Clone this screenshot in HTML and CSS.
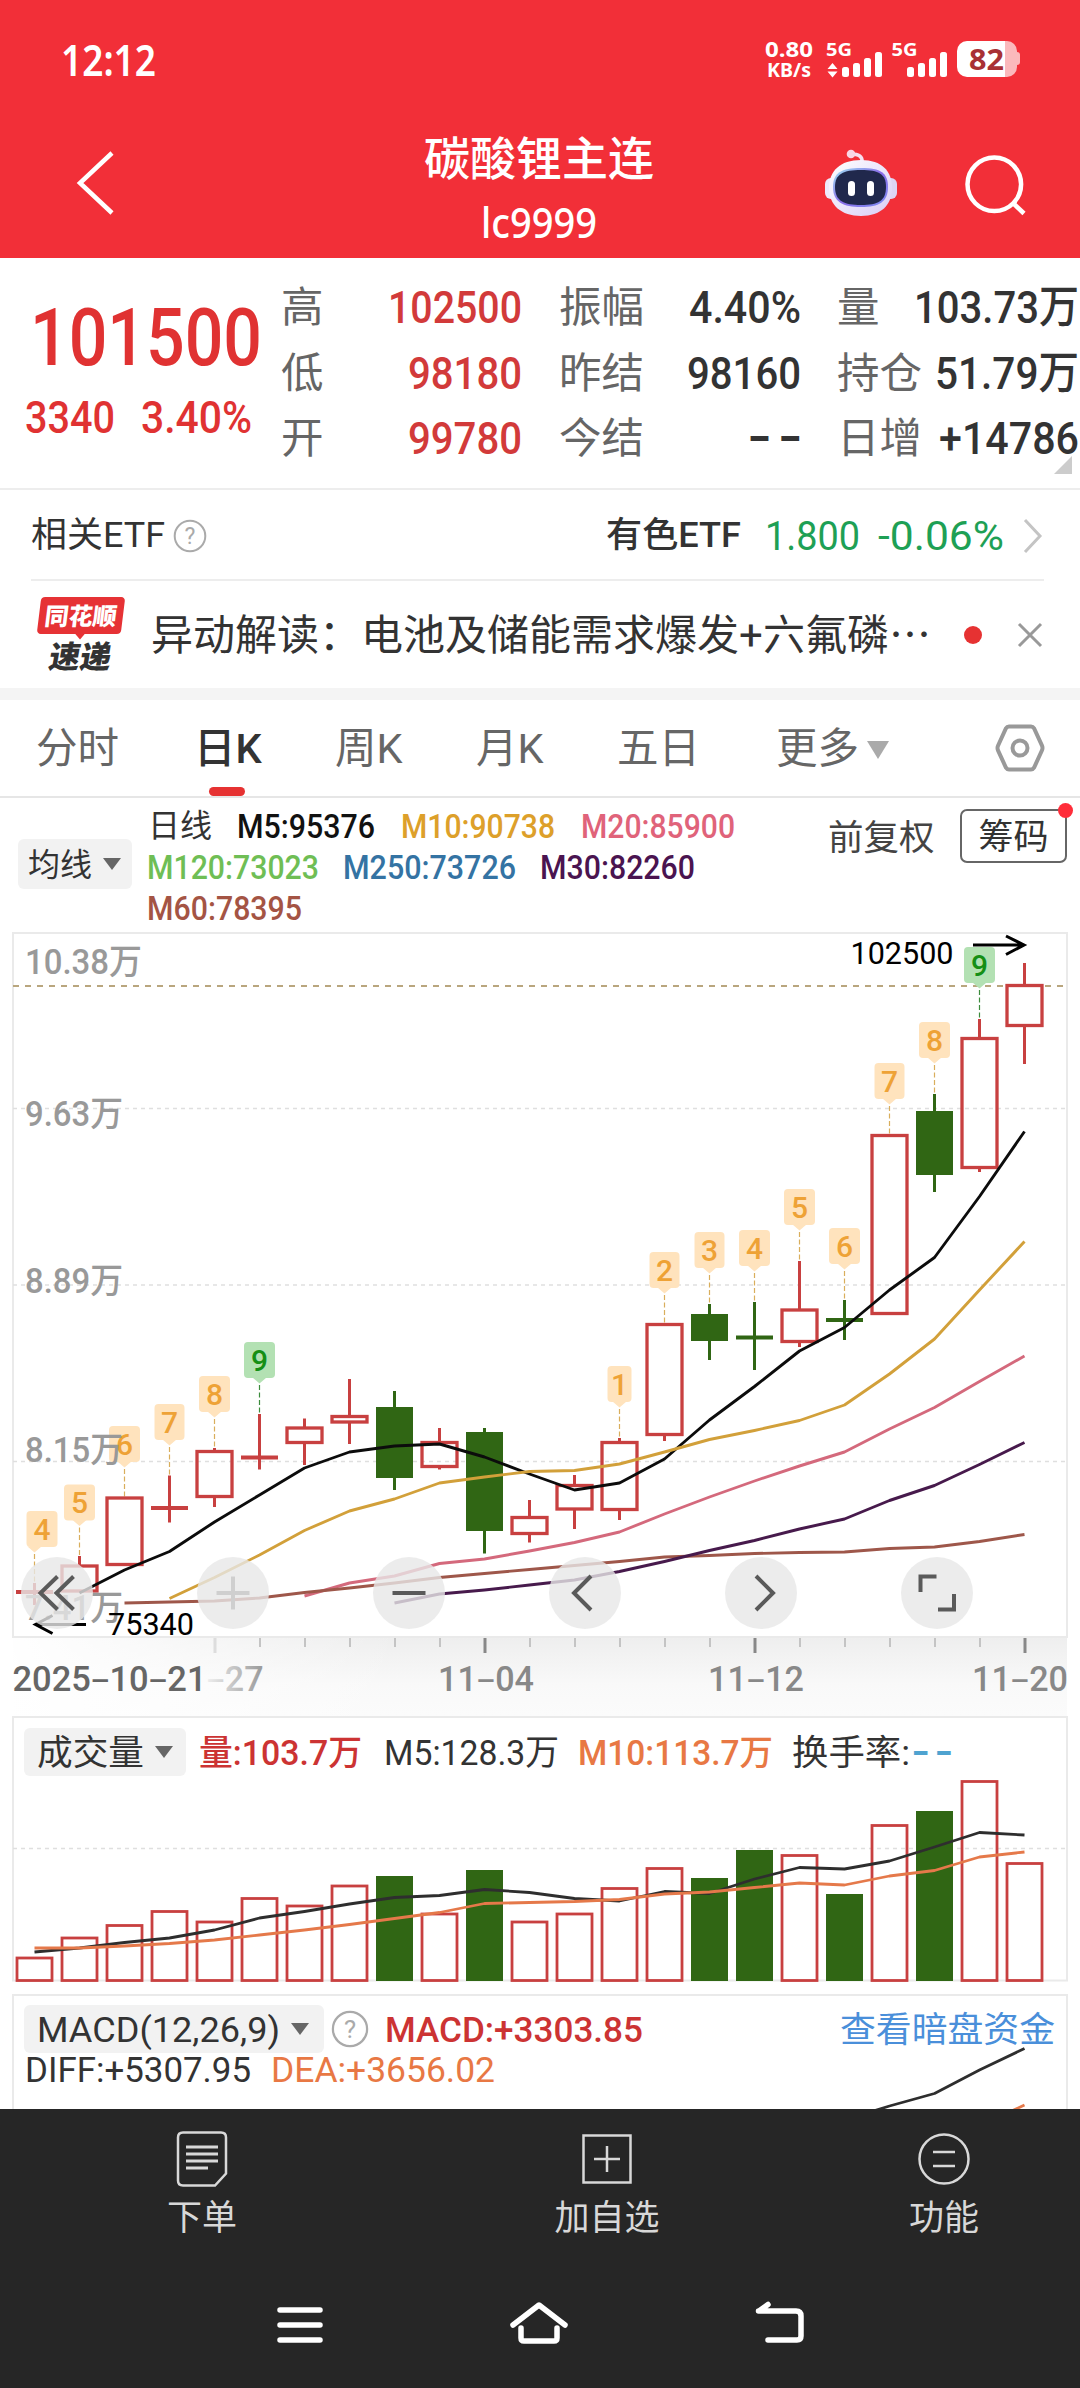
FILE: index.html
```html
<!DOCTYPE html>
<html lang="zh-CN">
	<head>
		<meta charset="utf-8">
		<meta name="viewport" content="width=device-width">
		<title>碳酸锂主连 lc9999</title>
		<link rel="stylesheet" href="styles.css">
	</head>
	<body>
		<header>
			<div class="status">
				<span class="clock fit" data-w="95">12:12</span>
				<div class="speed"><span class="fit" data-w="48">0.80</span><small class="fit" data-w="44">KB/s</small></div>
				<svg class="signal" width="131" height="38" viewBox="826 40 131 38">
					<g fill="#fff">
						<text x="826" y="55.500" textLength="26" lengthAdjust="spacingAndGlyphs">5G</text>
						<path d="M827.500 69l5-6 5 6zM827.500 71.500l5 6 5-6z"/>
						<rect x="842" y="67" width="7" height="10" rx="2.500"/><rect x="853" y="63" width="7" height="14" rx="2.500"/><rect x="864" y="58" width="7" height="19" rx="2.500"/><rect x="875" y="52" width="7" height="25" rx="2.500"/>
						<text x="891.500" y="55.500" textLength="26" lengthAdjust="spacingAndGlyphs">5G</text>
						<rect x="907" y="67" width="7" height="10" rx="2.500"/><rect x="918" y="63" width="7" height="14" rx="2.500"/><rect x="929" y="58" width="7" height="19" rx="2.500"/><rect x="940" y="52" width="7" height="25" rx="2.500"/>
					</g>
				</svg>
				<div class="battery"><span class="fit" data-w="35">82</span></div>
			</div>
			<div class="titlebar">
				<svg class="back" width="40" height="68" viewBox="0 0 40 68"><path d="M36 4L4 34l32 30"/></svg>
				<div class="title"><h1>碳酸锂主连</h1><span class="fit" data-w="116">lc9999</span></div>
				<svg class="robot" width="76" height="70" viewBox="823 148 76 70">
					<defs>
						<linearGradient id="shell" x1="0" y1="0" x2="1" y2="1"><stop offset="0" stop-color="#fff"/><stop offset=".5" stop-color="#ece6fb"/><stop offset="1" stop-color="#d9cdf5"/></linearGradient>
						<linearGradient id="rim" x1="0" y1="0" x2="1" y2="1"><stop offset="0" stop-color="#9fe4f2"/><stop offset=".5" stop-color="#8a6ce8"/><stop offset="1" stop-color="#7b8df0"/></linearGradient>
					</defs>
					<path d="M862 162q1-8-11-8" fill="none" stroke="#f7dff0" stroke-width="3.500"/>
					<circle cx="851" cy="154" r="4.300" fill="#f9d6e6"/>
					<rect x="825" y="178" width="14" height="21" rx="6" fill="#eee9fb"/><rect x="883" y="178" width="14" height="21" rx="6" fill="#ddd5f5"/>
					<path d="M861 160c21 0 31 11 31 28s-11 28-31 28-32-11-32-28 11-28 32-28z" fill="url(#shell)"/>
					<path d="M861 168c20 0 27 5 27 19 0 15-9 20-27 20s-28-5-28-20c0-14 8-19 28-19z" fill="url(#rim)"/>
					<path d="M861 170c18 0 25 4 25 17 0 14-8 18-25 18s-26-4-26-18c0-13 8-17 26-17z" fill="#20284c"/>
					<rect x="848" y="181" width="7" height="15" rx="3.500" fill="#fff"/><rect x="867" y="181" width="7" height="15" rx="3.500" fill="#fff"/>
				</svg>
				<svg class="search" width="64" height="64" viewBox="964 154 64 64"><circle cx="994.300" cy="184.300" r="26.800"/><path d="M1013 203l11 10.500"/></svg>
			</div>
		</header>

		<section class="quote">
			<div class="price">
				<b class="fit" data-w="232">101500</b>
				<div><span class="fit" data-w="90">3340</span><span class="fit" data-w="111">3.40%</span></div>
			</div>
			<dl class="col1">
				<dt>高</dt><dd><span class="fit" data-w="134">102500</span></dd>
				<dt>低</dt><dd><span class="fit" data-w="114">98180</span></dd>
				<dt>开</dt><dd><span class="fit" data-w="114">99780</span></dd>
			</dl>
			<dl class="col2">
				<dt>振幅</dt><dd><span class="fit" data-w="112">4.40%</span></dd>
				<dt>昨结</dt><dd><span class="fit" data-w="114">98160</span></dd>
				<dt>今结</dt><dd><span class="fit nil" data-w="53">– –</span></dd>
			</dl>
			<dl class="col3">
				<dt>量</dt><dd><span class="fit" data-w="165">103.73万</span></dd>
				<dt>持仓</dt><dd><span class="fit" data-w="144">51.79万</span></dd>
				<dt>日增</dt><dd><span class="fit" data-w="140">+14786</span></dd>
			</dl>
			<i class="corner"></i>
		</section>

		<section class="etf">
			<span class="fit" data-w="134">相关ETF</span>
			<svg class="help" width="34" height="34" viewBox="0 0 34 34"><circle cx="17" cy="17" r="15.300"/><text x="17" y="25">?</text></svg>
			<b class="fit" data-w="135">有色ETF</b>
			<span class="fit down" data-w="95">1.800</span>
			<span class="fit down" data-w="126">-0.06%</span>
			<svg class="more" width="20" height="36" viewBox="0 0 20 36"><path d="M2 2l15 16L2 34"/></svg>
		</section>

		<section class="news">
			<div class="logo"><em>同花顺</em><strong>速递</strong></div>
			<span class="fit headline" data-w="780">异动解读：电池及储能需求爆发+六氟磷⋯</span>
			<i class="dot"></i>
			<svg width="26" height="26" viewBox="0 0 26 26"><path d="M2 2l22 22M24 2L2 24"/></svg>
		</section>

		<nav class="tabs">
			<span>分时</span><span class="on">日K</span><span>周K</span><span>月K</span><span>五日</span><span>更多<i class="tri"></i></span>
			<svg width="50" height="50" viewBox="0 0 50 50"><path d="M14 3.500h22q2 0 3 1.700l8 17.500q1 2.300 0 4.600l-8 17.500q-1 1.700-3 1.700H14q-2 0-3-1.700L3 27.300q-1-2.300 0-4.600l8-17.500q1-1.700 3-1.700z"/><circle cx="25" cy="25" r="7.500"/></svg>
		</nav>

		<section class="legend">
			<div class="pick"><span class="fit" data-w="64">均线</span><i class="tri"></i></div>
			<div class="mas">
				<div><span class="fit ma" data-w="64">日线</span><span class="fit m5" data-w="138">M5:95376</span><span class="fit m10" data-w="154">M10:90738</span><span class="fit m20" data-w="154">M20:85900</span></div>
				<div><span class="fit m120" data-w="172">M120:73023</span><span class="fit m250" data-w="173">M250:73726</span><span class="fit m30" data-w="155">M30:82260</span></div>
				<div><span class="fit m60" data-w="155">M60:78395</span></div>
			</div>
			<span class="adjust">前复权</span>
			<span class="chips">筹码<i></i></span>
		</section>

		<section class="kline">
			<svg id="kline" width="1080" height="784" viewBox="0 932 1080 784"></svg>
			<div class="tools">
				<span><svg viewBox="0 0 72 72"><path d="M36.500 19.500L19.500 36l17 16.500M52.500 19.500L35.500 36l17 16.500"/></svg></span>
				<span><svg class="off" viewBox="0 0 72 72"><path d="M19.500 36h33M36 19.500v33"/></svg></span>
				<span><svg viewBox="0 0 72 72"><path d="M19.500 36h33"/></svg></span>
				<span><svg viewBox="0 0 72 72"><path d="M42 19L25 36l17 17"/></svg></span>
				<span><svg viewBox="0 0 72 72"><path d="M31 19l17 17-17 17"/></svg></span>
				<span><svg viewBox="0 0 72 72"><path d="M19.500 35V19.500h16M37 52.500h16V37"/></svg></span>
			</div>
		</section>

		<section class="volume">
			<div class="head">
				<div class="pick"><span class="fit" data-w="107">成交量</span><i class="tri"></i></div>
				<span class="fit up" data-w="163">量:103.7万</span>
				<span class="fit" data-w="175">M5:128.3万</span>
				<span class="fit dea" data-w="195">M10:113.7万</span>
				<span class="fit" data-w="118">换手率:</span>
				<span class="fit none" data-w="40">– –</span>
			</div>
			<svg id="volume" width="1080" height="278" viewBox="0 1716 1080 278"></svg>
		</section>

		<section class="macd">
			<div class="head">
				<div class="pick"><span class="fit" data-w="243">MACD(12,26,9)</span><i class="tri"></i></div>
				<svg class="help" width="38" height="38" viewBox="0 0 34 34"><circle cx="17" cy="17" r="15.300"/><text x="17" y="25">?</text></svg>
				<span class="fit up" data-w="258">MACD:+3303.85</span>
				<a class="fit" data-w="215">查看暗盘资金</a>
			</div>
			<div class="head2"><span class="fit" data-w="226">DIFF:+5307.95</span><span class="fit dea" data-w="224">DEA:+3656.02</span></div>
			<svg id="macd" width="1080" height="115" viewBox="0 1994 1080 115"></svg>
		</section>

		<footer>
			<div class="actions">
				<div><svg width="56" height="58" viewBox="0 0 56 58"><path d="M9 2.500h38q5 0 5 5v36L41 55.500H9q-5 0-5-5v-43q0-5 5-5z"/><path d="M12 17h32M12 24h32M12 31h32M12 38h22" stroke-width="3"/></svg>下单</div>
				<div><svg width="56" height="58" viewBox="0 0 56 58"><path d="M4.500 5.500h47v47h-47zM28 16v26M15 29h26"/></svg>加自选</div>
				<div><svg width="56" height="58" viewBox="0 0 56 58"><circle cx="28" cy="29" r="24.500"/><path d="M17 22h22M17 36h22"/></svg>功能</div>
			</div>
			<div class="sysnav">
				<svg width="50" height="48" viewBox="0 0 50 48"><path d="M5 10h40M5 25h40M5 40h40"/></svg>
				<svg width="60" height="48" viewBox="0 0 60 48"><path d="M4 25L30 5l26 20M12 28v10q0 3 3 3h30q3 0 3-3V28"/></svg>
				<svg width="54" height="48" viewBox="0 0 54 48"><path d="M15 4.500L6 11q-1 0 0 0h37q5 0 5 5v20q0 4-4 4H15"/></svg>
			</div>
		</footer>
		<script src="chart.js"></script>
	</body>
</html>
```
FILE: styles.css
```css
*{
	box-sizing:border-box;
}

body{
	margin:0;
	width:1080px;
	height:2388px;
	overflow:hidden;
	display:flex;
	flex-direction:column;
	background:#FFF;
	color:#333;
	font-family:Roboto,"Noto Sans CJK SC",sans-serif;
	font-size:35px;
	line-height:1;
}

svg{
	display:block;
	flex:none;
}

i,em{
	font-style:normal;
}

section,nav,header,footer{
	flex:none;
}

.fit{
	display:inline-block;
	white-space:nowrap;
	transform-origin:0 50%;
	flex:none;
}

.tri{
	display:inline-block;
	width:18px;
	height:12px;
	background:#666;
	clip-path:polygon(0 0,100% 0,50% 100%);
}

/* header */
header{
	height:258px;
	background:#F22F38;
	color:#FFF;
}

.status{
	display:flex;
	height:118px;
	padding-left:61px;
	align-items:center;
}

.clock{
	font:600 43px/1 "Noto Sans",sans-serif;
}

.speed{
	display:flex;
	flex-direction:column;
	align-items:center;
	gap:1px;
	margin-left:609px;
	font:bold 21.5px/20px "Noto Sans",sans-serif;
}

.speed small{
	font-size:19px;
}

.signal{
	margin-left:13px;
	overflow:visible;
	font:bold 18px "Noto Sans",sans-serif;
}

.battery{
	position:relative;
	width:60px;
	height:36px;
	border-radius:10px;
	background:linear-gradient(90deg,#FFF 48px,#FBB9BC 48px);
	color:#A83034;
	font:bold 28px/36px "Noto Sans",sans-serif;
	padding-left:12px;
}

.battery::after{
	content:"";
	position:absolute;
	left:60px;
	top:11px;
	width:3px;
	height:13px;
	border-radius:0 3px 3px 0;
	background:#FBB9BC;
}

.titlebar{
	display:flex;
	height:140px;
	padding-left:76px;
	align-items:flex-start;
}

.titlebar svg{
	fill:none;
	stroke:#FFF;
	stroke-width:4.5;
}

.titlebar .robot{
	stroke:none;
	margin:30px 0 0 169px;
}

.titlebar .back{
	margin-top:31px;
}

.titlebar .search{
	margin:36px 0 0 65px;
}

.title{
	width:230px;
	margin:18px 0 0 308px;
	text-align:center;
	font:500 42px/46px "Noto Sans","Noto Sans CJK SC",sans-serif;
}

.title h1{
	margin:0 0 17px;
	font:500 46px/46px Roboto,"Noto Sans CJK SC",sans-serif;
	white-space:nowrap;
}

/* quote */
.quote{
	position:relative;
	display:flex;
	height:232px;
	border-bottom:2px solid #EDEDED;
	font-weight:500;
}

.price{
	width:281px;
	color:#E03232;
}

.price b{
	display:block;
	margin:40px 0 0 30px;
	font-size:80px;
	font-weight:500;
	line-height:80px;
}

.price div{
	display:flex;
	gap:26px;
	margin:16px 0 0 25px;
	font-size:45px;
	line-height:48px;
}

dl{
	display:grid;
	grid-template-columns:auto 1fr;
	grid-auto-rows:65.6px;
	align-items:center;
	margin:17px 0 0;
	height:197px;
	font-size:45px;
	line-height:65px;
}

dt{
	color:#666;
	font-size:42.5px;
	font-weight:400;
	white-space:nowrap;
}

dd{
	margin:0;
	text-align:right;
	height:65px;
}

.nil{
	font-weight:700;
}

.col1{
	width:241px;
	color:#D23A3A;
}

.col2{
	width:242px;
	margin-left:37px;
}

/* the long value of the first row runs close to its one-character label */
.col3{
	grid-template-columns:42px 1fr;
	width:242px;
	margin-left:36px;
}

.corner{
	position:absolute;
	right:8px;
	bottom:14px;
	width:18px;
	height:18px;
	background:#CCC;
	clip-path:polygon(100% 0,100% 100%,0 100%);
}

/* etf + news */
.etf{
	display:flex;
	align-items:center;
	height:91px;
	margin:0 36px 0 31px;
	padding-top:2px;
	border-bottom:2px solid #EDEDED;
	color:#333;
	font-size:35px;
	line-height:44px;
}

.etf b{
	margin-left:399px;
	font-weight:500;
}

.help{
	fill:none;
	stroke:#AAA;
	stroke-width:2;
}

.help text{
	fill:#AAA;
	stroke:none;
	font-size:23px;
	text-anchor:middle;
}

.etf .help{
	margin-left:8px;
}

.down{
	color:#1EA055;
	font-size:41px;
	margin-left:24px;
}

.down + .down{
	margin-left:18px;
}

.more{
	margin-left:19px;
	fill:none;
	stroke:#C4C4C4;
	stroke-width:3;
}

.news{
	display:flex;
	align-items:center;
	height:119px;
	padding:0 36px 0 37px;
	border-bottom:12px solid #F4F4F4;
}

.logo{
	position:relative;
	display:flex;
	flex-direction:column;
	align-items:center;
	width:88px;
	height:76px;
	font-family:"Noto Sans CJK SC",sans-serif;
	font-weight:900;
}

.logo em{
	width:84px;
	height:37px;
	border-radius:4px;
	background:#E63235;
	color:#FFF;
	font-size:24px;
	line-height:35px;
	text-align:center;
	transform:skewX(-7deg);
}

.logo::after{
	content:"";
	position:absolute;
	left:37px;
	top:36px;
	width:12px;
	height:7px;
	background:#E63235;
	clip-path:polygon(0 0,100% 0,50% 100%);
}

.logo strong{
	margin-top:5px;
	font-size:31px;
	font-weight:900;
	line-height:31px;
	transform:skewX(-10deg);
}

.headline{
	margin-left:26px;
	padding-top:2px;
	font-size:42px;
	line-height:50px;
}

.dot{
	width:18px;
	height:18px;
	border-radius:50%;
	background:#E63232;
	margin-left:33px;
}

.news svg{
	margin-left:35px;
	stroke:#999;
	stroke-width:3;
}

/* tabs */
.tabs{
	display:flex;
	align-items:center;
	position:relative;
	height:98px;
	padding:0 35px 0 36px;
	border-bottom:2px solid #E6E6E6;
	color:#666;
	font-size:41.5px;
	line-height:98px;
}

.tabs span{
	position:relative;
	width:141px;
	height:96px;
	white-space:nowrap;
}

.tabs span:nth-child(1){
	width:158px;
}

.tabs span:nth-child(5){
	width:159px;
}

.tabs .on{
	color:#333;
	font-weight:500;
}

.tabs .on::after{
	content:"";
	position:absolute;
	left:15px;
	bottom:0;
	width:36px;
	height:9px;
	border-radius:5px;
	background:#E63232;
}

.tabs .tri{
	width:22px;
	height:18px;
	margin-left:8px;
	background:#AAA;
	vertical-align:4px;
}

.tabs svg{
	margin-left:auto;
	fill:none;
	stroke:#999;
	stroke-width:4;
}

/* ma legend */
.legend{
	display:flex;
	height:134px;
	padding-left:18px;
	font-size:34px;
	line-height:41px;
}

.pick{
	display:flex;
	align-items:center;
	gap:11px;
	border-radius:6px;
	background:#F2F2F2;
}

.legend .pick{
	width:114px;
	height:50px;
	margin:41px 15px 0 0;
	padding-left:10px;
	font-size:32px;
	line-height:46px;
}

.legend .pick span{
	padding-top:2px;
}

.mas{
	width:681px;
	margin-top:8px;
	font-weight:500;
}

.mas div{
	display:flex;
	height:41px;
	gap:26px;
}

.mas div + div{
	gap:24px;
}

.mas .ma{
	font-weight:400;
	font-size:32px;
	margin-left:1px;
	margin-right:-1px;
}

.m5{color:#111;}
.m10{color:#DDA02A;}
.m20{color:#E0637A;}
.m120{color:#6FBE55;}
.m250{color:#3473A3;}
.m30{color:#4A1450;}
.m60{color:#A45444;}

.adjust{
	width:132px;
	margin-top:20px;
	color:#444;
	font-size:35.5px;
}

.chips{
	position:relative;
	width:107px;
	height:54px;
	margin-top:11px;
	border:2px solid #666;
	border-radius:7px;
	font-size:35px;
	line-height:53px;
	text-align:center;
}

.chips i{
	position:absolute;
	right:-8px;
	top:-8px;
	width:15px;
	height:15px;
	border-radius:50%;
	background:#FF2D3A;
}

/* charts */
.kline{
	position:relative;
	height:784px;
}

.tools{
	position:absolute;
	left:21px;
	top:625px;
	display:flex;
	gap:104px;
}

.tools span{
	width:72px;
	height:72px;
	border-radius:50%;
	background:rgba(231,231,231,.8);
}

.tools svg{
	fill:none;
	stroke:#5A5A5A;
	stroke-width:4;
}

.tools .off{
	stroke:#CFCFCF;
}

.volume,.macd{
	position:relative;
	height:278px;
}

.macd{
	height:115px;
}

.head,.head2{
	position:absolute;
	left:24px;
	top:12px;
	right:0;
	display:flex;
	align-items:center;
	height:48px;
	font-size:35px;
	line-height:46px;
}

.head .pick{
	width:162px;
	height:48px;
	padding-left:13px;
	margin-right:13px;
}

.head .fit{
	padding-top:3px;
}

.head .up{
	margin-right:22px;
	color:#CC3333;
	font-weight:500;
}

.head .dea{
	margin:0 19px;
	font-weight:500;
}

.dea{
	color:#E87844;
}

.head .none{
	margin-left:2px;
	color:#4FA3D0;
	font-weight:700;
}

.macd .head{
	top:11px;
}

.macd .head .pick{
	width:300px;
	margin-right:7px;
}

.macd .head .up{
	margin-left:16px;
}

.head a{
	margin-left:175px;
	color:#4A8FDA;
}

.head2{
	top:53px;
	left:25px;
	gap:20px;
}

svg text{
	white-space:pre;
}

/* footer */
footer{
	height:279px;
	background:#262626;
	color:#D8D8D8;
}

.actions{
	display:flex;
	height:140px;
	padding:21px 0 0 102px;
}

.actions div{
	display:flex;
	flex-direction:column;
	align-items:center;
	width:200px;
	gap:8px;
	font-size:35px;
	line-height:46px;
}

.actions div + div{
	margin-left:205px;
}

.actions div + div + div{
	margin-left:137px;
}

.actions svg{
	fill:none;
	stroke:#D8D8D8;
	stroke-width:2.5;
}

.sysnav{
	display:flex;
	align-items:center;
	height:139px;
	padding:10px 0 0 275px;
	gap:184px;
}

.sysnav svg{
	fill:none;
	stroke:#FFF;
	stroke-width:5.5;
	stroke-linecap:round;
	stroke-linejoin:round;
}
```
FILE: chart.js
```js
function elm(id){
	return document.getElementById(id);
}

var X0=34.5,STEP=45;
var RED="#C84040",GREEN="#306614";

// type, body top, body bottom, high, low
var candles=[
	["r",1592,1592,1583,1605],["r",1566,1591,1556,1591],["r",1498,1564.5,1498,1564],
	["r",1508,1508,1475.5,1522.5],["r",1451.5,1496.5,1448,1507],["r",1457.5,1457.5,1414,1469.5],
	["r",1428,1442.5,1418.5,1465],["r",1416.5,1422,1379,1444],["g",1407,1478,1391,1490],
	["r",1442.5,1466.5,1428,1469.5],["g",1432,1531,1428,1553.5],["r",1517.5,1533.5,1500,1542.5],
	["r",1485.5,1509,1475,1529],["r",1442.5,1509.5,1438,1520],["r",1324.5,1434.5,1324,1441],
	["g",1314,1341,1304,1360],["g",1337.5,1337.5,1302,1370],["r",1310,1341.5,1261,1347],
	["g",1320,1320,1300,1340],["r",1135.5,1313.5,1135,1314],["g",1111,1175,1094,1192],
	["r",1038.5,1167.5,1019,1172],["r",985.5,1025.5,963,1064]
];

// color, first candle index, then one y per candle
var mas=[
	["#0C0C0C",1,[1593,1570,1551.5,1522,1495,1468,1452,1446,1444,1457,1474,1490,1483,1459,1420,1386.5,1351,1327.5,1290,1257.5,1196.5,1131.5]],
	["#D2A03A",3,[1598.5,1577.5,1555,1530.5,1511,1499,1483,1477,1471.5,1470.5,1464,1452,1439.5,1430.5,1420.5,1405,1374,1339,1290,1241.5]],
	["#D4697C",6,[1596,1583,1576,1563.5,1559,1551,1542.5,1532,1514,1497,1481,1466,1452,1429,1407.5,1381.5,1356]],
	["#9E574A",2,[1603,1602,1601,1598,1592.5,1588,1583,1577.5,1573.5,1569.5,1565.5,1561.5,1557,1555.5,1553.5,1552.5,1552,1548.5,1547,1541.5,1534.5]],
	["#471A4C",8,[1603,1594,1590,1585,1580,1571.5,1561.5,1550.5,1540.5,1529,1519,1500.5,1485.5,1464.5,1442.5]]
];

// candle index, number, box top, box width
var marks=[
	[0,4,1511,31],[1,5,1484.5,31],[2,6,1426,31],[3,7,1404,30],[4,8,1376,31],[5,9,1342,31],
	[13,1,1366,24],[14,2,1252,30],[15,3,1232,30],[16,4,1230,31],[17,5,1189,31],[18,6,1228,31],
	[19,7,1063,30],[20,8,1022,31],[21,9,947,31]
];

var vols=[1958,1938,1925.5,1911.5,1922,1898.5,1906,1886,1876,1914,1870,1922,1914,1888.5,1868.5,1878,1850,1855.5,1894,1825.5,1811,1781.5,1863.5];
var vma5=[1952,1948,1942.5,1938,1930,1918,1911.5,1904,1897.5,1895.5,1889.5,1892.5,1898.5,1901,1891.5,1893.5,1879,1867.5,1869,1861,1847,1832.5,1835];
var vma10=[1948,1948,1946,1943.5,1940,1935,1930,1924.5,1918.5,1912.5,1903.5,1902.5,1901.5,1899.5,1894,1892,1887.5,1883,1885,1876,1870.5,1857,1852];

function cx(i){
	return X0+STEP*i;
}

function seg(x1,y1,x2,y2,c,w,dash){
	return '<path d="M'+x1+' '+y1+'L'+x2+' '+y2+'" stroke="'+c+'" stroke-width="'+w+'"'+(dash?' stroke-dasharray="'+dash+'"':'')+'/>';
}

function poly(start,ys,c,w){
	var p=ys.map(function(y,i){return cx(start+i)+","+y;}).join(" ");
	return '<polyline points="'+p+'" fill="none" stroke="'+c+'" stroke-width="'+w+'" stroke-linejoin="round"/>';
}

function text(x,y,w,size,c,s){
	return '<text x="'+x+'" y="'+y+'" textLength="'+w+'" lengthAdjust="spacingAndGlyphs" font-size="'+size+'" fill="'+c+'">'+s+'</text>';
}

function box(i,top,bottom,w){
	return '<rect x="'+(cx(i)-17.5)+'" y="'+top+'" width="35" height="'+(bottom-top)+'" fill="none" stroke="'+RED+'" stroke-width="'+w+'"/>';
}

function drawKline(){
	var s='<defs><linearGradient id="v" x2="0" y2="1"><stop offset="0" stop-color="#EEE"/><stop offset=".6" stop-color="#F9F9F9"/><stop offset="1" stop-color="#FBFBFB"/></linearGradient>'+
		'<linearGradient id="h"><stop offset="0" stop-color="#FFF"/><stop offset="1" stop-color="#FFF" stop-opacity="0"/></linearGradient>'+
		'<linearGradient id="d"><stop offset="0" stop-color="#EEE"/><stop offset="1" stop-color="#999"/></linearGradient></defs>';
	s+='<rect x="13" y="1638" width="1054" height="78" fill="url(#v)"/><rect x="0" y="1638" width="400" height="78" fill="url(#h)"/>';
	s+='<rect x="13" y="933" width="1054" height="704" fill="none" stroke="#EAEAEA" stroke-width="2"/>';
	[1108.5,1285,1461.5].forEach(function(y){
		s+=seg(13,y,1067,y,"#DFDFDF",1.5,"4 4");
	});
	s+=seg(13,986,1067,986,"#B9A67E",2,"6 6");
	marks.forEach(function(m){
		var x=cx(m[0]),l=Math.max(x-m[3]/2,26.5),g=m[1]==9,t=m[2],bg=g?"#B3E1B3":"#FFE3BD";
		s+='<rect x="'+l+'" y="'+t+'" width="'+m[3]+'" height="36" rx="4" fill="'+bg+'"/>';
		s+='<path d="M'+(x-7)+' '+(t+35.5)+'h14l-7 6z" fill="'+bg+'"/>';
		s+=seg(x,t+43,x,candles[m[0]][3],g?"#3C8C3C":"#D9AE5C",1.2,"5 2.5");
		s+='<text x="'+(l+m[3]/2)+'" y="'+(t+28.5)+'" font-size="30" font-weight="500" text-anchor="middle" fill="'+(g?"#158F15":"#EEA236")+'">'+m[1]+'</text>';
	});
	candles.forEach(function(c,i){
		var x=cx(i),col=c[0]=="r"?RED:GREEN;
		s+=seg(x,c[3],x,c[1],col,3)+seg(x,c[2],x,c[4],col,3);
		if(c[1]==c[2]) s+=seg(x-18.5,c[1],x+18.5,c[1],col,4);
		else if(c[0]=="r") s+=box(i,c[1],c[2],3.3);
		else s+='<rect x="'+(x-18.5)+'" y="'+c[1]+'" width="37" height="'+(c[2]-c[1])+'" fill="'+GREEN+'"/>';
	});
	mas.forEach(function(m){
		s+=poly(m[1],m[2],m[0],2.9);
	});
	s+='<g font-weight="500">';
	[["10.38万",974,117],["9.63万",1126,98],["8.89万",1293,98],["8.15万",1461.5,98],["7.41万",1619.5,98]].forEach(function(t){
		s+=text(25,t[1],t[2],35,"#999",t[0]);
	});
	s+='</g><g fill="none" stroke="#000" stroke-width="3"><path d="M973 945h50M1006 936l18 9-18 9.500"/><path d="M86 1624.500H36M52.500 1615.500l-17 9 17 9"/></g>';
	s+=text(850.5,964,103,31,"#000","102500")+text(108,1635,86,31,"#000","75340");
	for(var i=4;i<23;i++){
		var big=(i-4)%6==0;
		s+=seg(cx(i)+.5,1638,cx(i)+.5,big?1653:1647,i==4?"#DDD":big?"#888":"#C4C4C4",big?3:2);
	}
	s+='<g font-weight="500">'+text(12.5,1691,194,35.5,"#666","2025‒10‒21")+text(206.5,1691,57,35.5,"url(#d)","‒27");
	s+=text(438,1691,96,35.5,"#888","11‒04")+text(708,1691,96,35.5,"#888","11‒12")+text(972,1691,96,35.5,"#888","11‒20")+'</g>';
	elm("kline").innerHTML=s;
}

function drawVolume(){
	var s='<rect x="13" y="1717" width="1054" height="263.500" fill="none" stroke="#EAEAEA" stroke-width="2"/>'+seg(13,1848.5,1067,1848.5,"#DFDFDF",1.5,"4 4");
	vols.forEach(function(v,i){
		if(candles[i][0]=="r") s+=box(i,v,1980.5,2.8);
		else s+='<rect x="'+(cx(i)-18.5)+'" y="'+v+'" width="37" height="'+(1981-v)+'" fill="'+GREEN+'"/>';
	});
	s+=poly(0,vma5,"#2E2E2E",2.8)+poly(0,vma10,"#E5794A",2.8);
	elm("volume").innerHTML=s;
}

function drawMacd(){
	elm("macd").innerHTML='<rect x="13" y="1995" width="1054" height="140" fill="none" stroke="#EAEAEA" stroke-width="2"/>'+
		poly(18,[2120,2106,2093.5,2070,2048.5],"#2E2E2E",2.8)+poly(21,[2126,2105],"#E5794A",2.8);
}

function fit(){
	document.querySelectorAll(".fit").forEach(function(e){
		var w=+e.dataset.w,n;
		if(getComputedStyle(e).display=="block") e.style.width="max-content";
		n=e.getBoundingClientRect().width;
		e.style.width=n+"px";
		e.style.marginRight=(parseFloat(getComputedStyle(e).marginRight)+w-n)+"px";
		e.style.transform="scaleX("+w/n+")";
	});
}

drawKline();
drawVolume();
drawMacd();
fit();
```
